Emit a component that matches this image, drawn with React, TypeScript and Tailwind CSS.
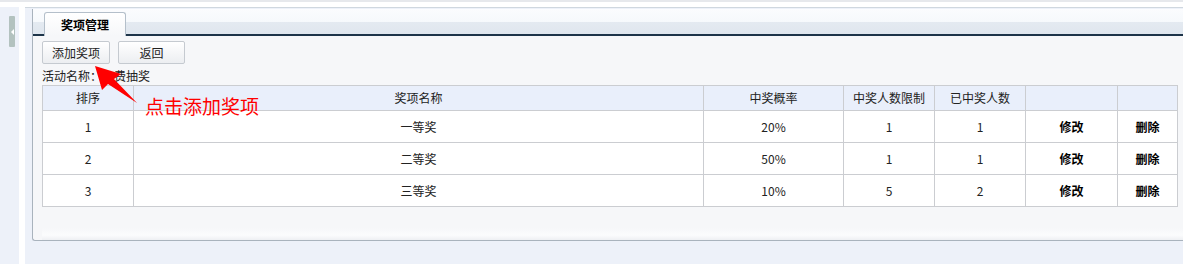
const ROWS = [
  { no: "1", name: "一等奖", rate: "20%", limit: "1", won: "1" },
  { no: "2", name: "二等奖", rate: "50%", limit: "1", won: "1" },
  { no: "3", name: "三等奖", rate: "10%", limit: "5", won: "2" },
];

const cell = "border border-[#cbcdd1] text-center align-middle";

export default function App() {
  return (
    <div
      className="relative flex h-[264px] w-[1183px] flex-col overflow-hidden bg-white text-[12px] text-[#222]"
      style={{ fontFamily: '"Noto Sans CJK SC", "Liberation Sans", sans-serif' }}
    >
      <div className="h-[2px] shrink-0 bg-[#e6e8ec]" />
      <div className="flex min-w-0 flex-1">
        {/* collapsed side bar */}
        <div className="flex w-[19px] shrink-0 flex-col">
          <div className="h-[5px] bg-white" />
          <div className="flex-1 bg-[#edf1f9] pl-[9px] pt-[9px]">
            <div className="flex h-[31px] w-[6px] items-center justify-center rounded-[1px] bg-[#b3c2bf]">
              <div className="h-0 w-0 border-y-[3px] border-r-[3px] border-y-transparent border-r-white" />
            </div>
          </div>
        </div>
        <div className="w-[6px] shrink-0 bg-white" />

        {/* main */}
        <div className="flex min-w-0 flex-1 flex-col overflow-hidden">
          <div className="h-[5px] shrink-0 bg-white" />
          <div className="h-[1px] shrink-0 bg-[#cfd7df]" />
          <div className="flex-1 bg-[#edf1f9] pl-[7px] pt-[1px]">
            <div className="flex h-[232px] w-[1170px] flex-col rounded-bl-[3px] border-b border-l border-[#a9b3bd] bg-[#f6f7f9]">
              {/* tab strip */}
              <div className="flex h-[27px] shrink-0 items-end border-b-2 border-[#1d3449] bg-[linear-gradient(#fbfcfe_0%,#f6f9fc_50%,#e4eaf1_52%,#dfe6ee_100%)] pl-[11px]">
                <div className="relative z-10 -mb-[2px] flex h-[24px] w-[82px] items-center justify-center rounded-t-[3px] border-x border-t border-[#b4bfca] bg-[linear-gradient(#ffffff,#f6f7f9)] font-bold text-black">
                  奖项管理
                </div>
              </div>

              {/* content */}
              <div className="flex flex-1 flex-col pl-[9px] pt-[5px]">
                <div className="flex gap-[8px]">
                  <button className="h-[23px] w-[68px] rounded-[2px] border border-[#c5cad0] bg-[linear-gradient(#ffffff,#eceef1)] text-[12px] text-[#222]">
                    添加奖项
                  </button>
                  <button className="h-[23px] w-[67px] rounded-[2px] border border-[#c5cad0] bg-[linear-gradient(#ffffff,#eceef1)] text-[12px] text-[#222]">
                    返回
                  </button>
                </div>
                <div className="mt-[4px] h-[16px] leading-[16px]">活动名称：免费抽奖</div>
                <table className="mt-[1px] w-[1135px] table-fixed border-collapse bg-white">
                  <colgroup>
                    <col className="w-[91px]" />
                    <col className="w-[570px]" />
                    <col className="w-[140px]" />
                    <col className="w-[91px]" />
                    <col className="w-[91px]" />
                    <col className="w-[92px]" />
                    <col className="w-[60px]" />
                  </colgroup>
                  <thead>
                    <tr className="h-[25px] bg-[#e9effb]">
                      <th className={`${cell} font-normal`}>排序</th>
                      <th className={`${cell} font-normal`}>奖项名称</th>
                      <th className={`${cell} font-normal`}>中奖概率</th>
                      <th className={`${cell} font-normal`}>中奖人数限制</th>
                      <th className={`${cell} font-normal`}>已中奖人数</th>
                      <th className={cell}></th>
                      <th className={cell}></th>
                    </tr>
                  </thead>
                  <tbody>
                    {ROWS.map((r) => (
                      <tr key={r.no} className="h-[32px]">
                        <td className={cell}>{r.no}</td>
                        <td className={cell}>{r.name}</td>
                        <td className={cell}>{r.rate}</td>
                        <td className={cell}>{r.limit}</td>
                        <td className={cell}>{r.won}</td>
                        <td className={`${cell} font-bold text-black`}>修改</td>
                        <td className={`${cell} font-bold text-black`}>删除</td>
                      </tr>
                    ))}
                  </tbody>
                </table>
                <div className="mt-auto h-[12px] bg-[linear-gradient(#f6f7f9,#fbfcfd_60%,#eef0f3)]" />
              </div>
            </div>
          </div>
        </div>
      </div>

      {/* red annotation */}
      <svg className="absolute left-0 top-0" width="200" height="120" viewBox="0 0 200 120">
        <polygon points="95,66 121,74 114,79 137,103 108,84 102,90" fill="#ff0000" />
      </svg>
      <span className="absolute left-[145px] top-[94px] text-[19px] leading-[24px] text-[#ff0000]">
        点击添加奖项
      </span>
    </div>
  );
}
